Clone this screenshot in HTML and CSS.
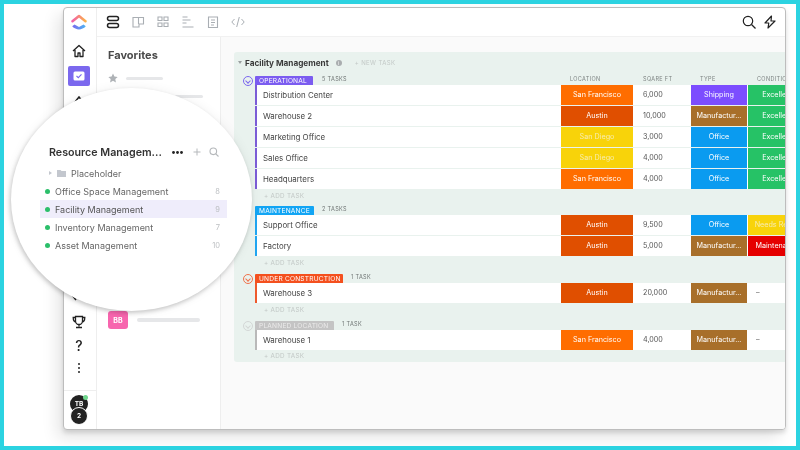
FILE: index.html
```html
<!DOCTYPE html>
<html lang="en">
<head>
<meta charset="utf-8">
<title>Facility Management</title>
<link rel="stylesheet" href="styles.css">
</head>
<body>
<div class="frame">
  <div class="window">
    <nav class="rail">
      <svg class="logo" viewBox="0 0 18 18" width="18" height="18">
        <defs>
          <linearGradient id="lg1" x1="0" x2="1"><stop offset="0" stop-color="#f25fa8"/><stop offset="1" stop-color="#fbb24a"/></linearGradient>
          <linearGradient id="lg2" x1="0" x2="1"><stop offset="0" stop-color="#7b68ee"/><stop offset="1" stop-color="#4db6f2"/></linearGradient>
        </defs>
        <path d="M2.500 7.200 9 2l6.500 5.200" fill="none" stroke="url(#lg1)" stroke-width="2.600" stroke-linecap="round" stroke-linejoin="round"/>
        <path d="M2.200 12.300C6 16.500 12 16.500 15.800 12.300L13.500 10.400 9 13 4.500 10.400Z" fill="url(#lg2)"/>
      </svg>
      <svg class="ico home" viewBox="0 0 14 14" width="14" height="14"><path d="M1 7 7 1.500 13 7M3 6v6.500h3V9h2v3.500h3V6" fill="none" stroke="#222" stroke-width="1.300" stroke-linejoin="round"/></svg>
      <div class="tile"><svg viewBox="0 0 12 10" width="12" height="10"><rect x=".5" y=".5" width="11" height="9" rx="1.500" fill="#fff"/><path d="M3.500 5 5.300 6.700 8.500 3.300" fill="none" stroke="#7b68ee" stroke-width="1.100"/></svg></div>
      <svg class="ico peek" viewBox="0 0 12 8" width="12" height="8"><path d="M2 7 6 2l4 5" fill="none" stroke="#222" stroke-width="1.500"/></svg>
      <div class="rail-spacer"></div>
      <svg class="ico peek-low" viewBox="0 0 12 8" width="12" height="8"><path d="M1 1 5 6" fill="none" stroke="#222" stroke-width="1.500"/></svg>
      <svg class="ico trophy" viewBox="0 0 14 14" width="14" height="14"><path d="M3.500 1.500h7V6a3.500 3.500 0 0 1-7 0ZM3.500 2.500H1.200c0 3 1 4.300 2.800 4.500M10.500 2.500h2.300c0 3-1 4.300-2.800 4.500M7 9.500v2M4 12.500h6" fill="none" stroke="#222" stroke-width="1.300"/></svg>
      <div class="help">?</div>
      <svg class="ico more" viewBox="0 0 4 12" width="4" height="12"><circle cx="2" cy="2" r="1.100" fill="#333"/><circle cx="2" cy="6" r="1.100" fill="#333"/><circle cx="2" cy="10" r="1.100" fill="#333"/></svg>
      <div class="rail-foot">
        <div class="avatar av-top">TB<span class="online"></span></div>
        <div class="avatar av-bottom">2</div>
      </div>
    </nav>
    <div class="content">
      <header class="topbar">
        <svg viewBox="0 0 14 14" width="14" height="14"><rect x="1.500" y="1.500" width="11" height="4" rx="2" fill="none" stroke="#222" stroke-width="1.500"/><rect x="1.500" y="8.500" width="11" height="4" rx="2" fill="none" stroke="#222" stroke-width="1.500"/></svg>
        <svg viewBox="0 0 14 14" width="14" height="14"><path d="M2 2.500h10.500V9H8v3H2ZM7.500 2.500V9" fill="none" stroke="#a9aeb3" stroke-width="1.100"/></svg>
        <svg viewBox="0 0 14 14" width="14" height="14"><path d="M2 2h4v3.500H2ZM8 2h4v3.500H8ZM2 8h4v3.500H2ZM8 8h4v3.500H8Z" fill="none" stroke="#a9aeb3" stroke-width="1.100"/></svg>
        <svg viewBox="0 0 14 14" width="14" height="14"><path d="M1.500 2h5M1.500 5h8M1.500 8h4M1.500 12h11" fill="none" stroke="#a9aeb3" stroke-width="1.100"/></svg>
        <svg viewBox="0 0 14 14" width="14" height="14"><path d="M2.500 2h9v10.500h-9ZM5 5h4M5 7.500h4M5 10h3" fill="none" stroke="#a9aeb3" stroke-width="1.100"/></svg>
        <svg viewBox="0 0 14 14" width="14" height="14"><path d="M3.500 4 .8 7l2.700 3M10.500 4l2.700 3-2.700 3M8.300 2 5.700 12" fill="none" stroke="#a9aeb3" stroke-width="1"/></svg>
        <div class="topbar-right">
          <svg viewBox="0 0 14 14" width="14" height="14"><circle cx="6" cy="6" r="4.700" fill="none" stroke="#222" stroke-width="1.200"/><path d="M9.500 9.500 13.500 13.500" stroke="#222" stroke-width="1.300"/></svg>
          <svg viewBox="0 0 12 14" width="12" height="14"><path d="M7.500 1 1 8h3.800L4 13 11 6H7Z" fill="none" stroke="#222" stroke-width="1.200" stroke-linejoin="round"/></svg>
        </div>
      </header>
      <div class="body">
        <aside class="sidebar">
          <h2 class="fav-title">Favorites</h2>
          <div class="fav-row">
            <svg viewBox="0 0 10 10" width="10" height="10"><path d="M5 .5 6.400 3.500 9.700 3.900 7.300 6.100 7.900 9.400 5 7.800 2.100 9.400 2.700 6.100.3 3.900 3.600 3.500Z" fill="#aeb2b6"/></svg>
            <span class="line line-short"></span>
          </div>
          <span class="line line-peek"></span>
          <div class="bb-row">
            <span class="bb">BB</span>
            <span class="line line-bb"></span>
          </div>
        </aside>
        <main class="main">
          <section class="panel">
            <div class="panel-head">
              <span class="caret-down"></span>
              <strong class="panel-title">Facility Management</strong>
              <span class="info">i</span>
              <span class="new-task">+ NEW TASK</span>
            </div>

            <div class="group-head">
              <span class="toggle t-purple"></span>
              <span class="label purple lab-op">OPERATIONAL</span>
              <span class="count">5 TASKS</span>
              <span class="col col-loc">LOCATION</span>
              <span class="col col-sq">SQARE FT</span>
              <span class="col col-type">TYPE</span>
              <span class="col col-cond">CONDITION</span>
            </div>
            <div class="rows">
              <div class="row b-purple"><span class="name">Distribution Center</span><span class="cell sf">San Francisco</span><span class="num">6,000</span><span class="cell ship">Shipping</span><span class="cell good">Excellent</span></div>
              <div class="row b-purple"><span class="name">Warehouse 2</span><span class="cell aus">Austin</span><span class="num">10,000</span><span class="cell mfg">Manufactur...</span><span class="cell good">Excellent</span></div>
              <div class="row b-purple"><span class="name">Marketing Office</span><span class="cell sd">San Diego</span><span class="num">3,000</span><span class="cell off">Office</span><span class="cell good">Excellent</span></div>
              <div class="row b-purple"><span class="name">Sales Office</span><span class="cell sd">San Diego</span><span class="num">4,000</span><span class="cell off">Office</span><span class="cell good">Excellent</span></div>
              <div class="row b-purple"><span class="name">Headquarters</span><span class="cell sf">San Francisco</span><span class="num">4,000</span><span class="cell off">Office</span><span class="cell good">Excellent</span></div>
            </div>
            <div class="add add-short">+ ADD TASK</div>

            <div class="group-head">
              <span class="label blue lab-mt">MAINTENANCE</span>
              <span class="count">2 TASKS</span>
            </div>
            <div class="rows">
              <div class="row b-blue"><span class="name">Support Office</span><span class="cell aus">Austin</span><span class="num">9,500</span><span class="cell off">Office</span><span class="cell needs">Needs Repair</span></div>
              <div class="row b-blue"><span class="name">Factory</span><span class="cell aus">Austin</span><span class="num">5,000</span><span class="cell mfg">Manufactur...</span><span class="cell maint">Maintenance</span></div>
            </div>
            <div class="add">+ ADD TASK</div>

            <div class="group-head">
              <span class="toggle t-red"></span>
              <span class="label red lab-uc">UNDER CONSTRUCTION</span>
              <span class="count">1 TASK</span>
            </div>
            <div class="rows">
              <div class="row b-red"><span class="name">Warehouse 3</span><span class="cell aus">Austin</span><span class="num">20,000</span><span class="cell mfg">Manufactur...</span><span class="dash">–</span></div>
            </div>
            <div class="add">+ ADD TASK</div>

            <div class="group-head">
              <span class="toggle t-grey"></span>
              <span class="label grey lab-pl">PLANNED LOCATION</span>
              <span class="count">1 TASK</span>
            </div>
            <div class="rows">
              <div class="row b-grey"><span class="name">Warehouse 1</span><span class="cell sf">San Francisco</span><span class="num">4,000</span><span class="cell mfg">Manufactur...</span><span class="dash">–</span></div>
            </div>
            <div class="add add-last">+ ADD TASK</div>
          </section>
        </main>
      </div>
    </div>
  </div>

  <div class="lens">
    <div class="lens-head">
      <strong class="lens-title">Resource Managem...</strong>
      <svg class="lens-dots" viewBox="0 0 11 3" width="11" height="3"><circle cx="1.500" cy="1.500" r="1.400" fill="#222"/><circle cx="5.500" cy="1.500" r="1.400" fill="#222"/><circle cx="9.500" cy="1.500" r="1.400" fill="#222"/></svg>
      <svg class="lens-plus" viewBox="0 0 8 8" width="8" height="8"><path d="M4 .5v7M.5 4h7" stroke="#b5b8bb" stroke-width="1"/></svg>
      <svg class="lens-search" viewBox="0 0 10 10" width="10" height="10"><circle cx="4.300" cy="4.300" r="3.300" fill="none" stroke="#b5b8bb" stroke-width="1.100"/><path d="M6.800 6.800 9.500 9.500" stroke="#b5b8bb" stroke-width="1.100"/></svg>
    </div>
    <div class="folder-row">
      <span class="caret-right"></span>
      <svg viewBox="0 0 9 8" width="9" height="8"><path d="M0 1h3.500l1 1H9v6H0Z" fill="#c3c7ce"/></svg>
      <span>Placeholder</span>
    </div>
    <ul class="lists">
      <li class="list-item"><span class="dot"></span><span class="list-name">Office Space Management</span><span class="list-num">8</span></li>
      <li class="list-item active"><span class="dot"></span><span class="list-name">Facility Management</span><span class="list-num">9</span></li>
      <li class="list-item"><span class="dot"></span><span class="list-name">Inventory Management</span><span class="list-num">7</span></li>
      <li class="list-item"><span class="dot"></span><span class="list-name">Asset Management</span><span class="list-num">10</span></li>
    </ul>
  </div>
</div>
</body>
</html>
```

FILE: styles.css
```css
* { box-sizing: border-box; }
html, body { margin: 0; padding: 0; }
body { width: 800px; height: 450px; overflow: hidden; background: #fff; font-family: Inter, "Liberation Sans", sans-serif; }

.frame {
  position: relative;
  width: 800px;
  height: 450px;
  border: 4px solid #2cd3e1;
  padding: 3px 0 0 59px;
  overflow: hidden;
  background: #fff;
  filter: blur(.35px);
}
.window {
  display: flex;
  width: 723px;
  height: 423px;
  background: #fff;
  border: 1px solid #bdbdbd;
  border-radius: 4px;
  overflow: hidden;
  box-shadow: -6px 8px 16px rgba(0,0,0,.1), 0 3px 4px rgba(0,0,0,.12);
}

/* rail */
.rail {
  flex: 0 0 33px;
  display: flex;
  flex-direction: column;
  align-items: center;
  padding: 6px 2px 0 0;
  border-right: 1px solid #eeeeee;
}
.logo { margin-bottom: 12px; }
.tile {
  width: 22px;
  height: 20px;
  margin-top: 8px;
  background: #7b68ee;
  border-radius: 2px;
  display: flex;
  align-items: center;
  justify-content: center;
}
.peek { margin-top: 9px; }
.rail-spacer { flex: 1; }
.peek-low { margin: 0 5px 13px 0; }
.help { font-size: 14px; font-weight: 500; color: #222; line-height: 16px; margin: 9px 0 8px; }
.more { margin-bottom: 16px; }
.rail-foot {
  flex: 0 0 39px;
  width: 32px;
  margin-right: -2px;
  padding-right: 2px;
  border-top: 1px solid #eeeeee;
  display: flex;
  flex-direction: column;
  align-items: center;
  padding-top: 4px;
}
.avatar {
  position: relative;
  flex: 0 0 18px;
  width: 18px;
  height: 18px;
  border-radius: 50%;
  background: #222;
  color: #fff;
  font-size: 6.500px;
  font-weight: 700;
  display: flex;
  align-items: center;
  justify-content: center;
}
.av-bottom { margin-top: -6px; border: 1px solid #fff; }
.online { position: absolute; right: 0; top: 0; width: 5px; height: 5px; border-radius: 50%; background: #6fd68c; }

/* top bar */
.content { flex: 1; min-width: 0; display: flex; flex-direction: column; }
.topbar {
  flex: 0 0 29px;
  display: flex;
  align-items: center;
  gap: 11px;
  padding: 0 9px;
  border-bottom: 1px solid #f1f1f1;
}
.topbar-right { margin-left: auto; display: flex; align-items: center; gap: 8px; }
.body { flex: 1; display: flex; min-height: 0; }

/* sidebar */
.sidebar {
  flex: 0 0 124px;
  border-right: 1px solid #eeeeee;
  padding: 11px 0 0 11px;
  display: flex;
  flex-direction: column;
}
.fav-title { margin: 0 0 11px; font-size: 11px; line-height: 14px; font-weight: 700; color: #4a4a4a; }
.fav-row { display: flex; align-items: center; gap: 8px; }
.line { display: block; background: #e6e7e9; border-radius: 2px; }
.line-short { width: 37px; height: 3px; }
.line-peek { width: 28px; height: 3px; margin: 12px 0 0 67px; }
.bb-row { display: flex; align-items: center; gap: 9px; margin-top: 213px; }
.bb { width: 20px; height: 18px; border-radius: 3px; background: #f765ae; color: #fff; font-size: 7px; font-weight: 700; display: flex; align-items: center; justify-content: center; }
.line-bb { width: 63px; height: 4px; }

/* main */
.main { flex: 1; min-width: 0; background: #fafafa; padding: 15px 0 0 13px; overflow: hidden; }
.panel { width: 551px; height: 310px; background: #e9f2ee; border-radius: 3px 0 0 3px; padding-left: 21px; overflow: hidden; }
.panel-head { height: 21px; margin-left: -17px; display: flex; align-items: center; gap: 3px; }
.caret-down { width: 0; height: 0; border: 2px solid transparent; border-top: 3px solid #9aa0a0; border-bottom: 0; }
.panel-title { font-size: 8.200px; font-weight: 700; color: #3a3a3a; white-space: nowrap; }
.info { width: 6px; height: 6px; margin-left: 4px; border-radius: 50%; background: #a9adaf; color: #fff; font-size: 5px; line-height: 6px; text-align: center; }
.new-task { margin-left: 10px; font-size: 6px; letter-spacing: .4px; color: #c2c8c6; }

.group-head { position: relative; height: 12px; display: flex; align-items: flex-end; }
.toggle { position: absolute; left: -12px; top: 3px; width: 10px; height: 10px; border-radius: 50%; border: 1px solid; }
.toggle::after { content: ""; position: absolute; left: 2px; top: 1.500px; width: 3px; height: 3px; border-right: 1px solid; border-bottom: 1px solid; transform: rotate(45deg); }
.t-purple { color: #7b68ee; }
.t-red { color: #f0714a; }
.t-grey { color: #d3d7d6; }
.label { height: 9px; line-height: 10px; padding-left: 4px; font-size: 6.600px; letter-spacing: .2px; color: #fff; white-space: nowrap; border-radius: 1px 1px 0 0; }
.lab-op { width: 58px; }
.lab-mt { width: 59px; }
.lab-uc { width: 88px; }
.lab-pl { width: 79px; }
.purple { background: #7b5cf0; }
.blue { background: #12a5f4; }
.red { background: #f4501e; }
.grey { background: #c4c4c4; color: #ecebeb; }
.count { margin-left: 8px; align-self: flex-start; padding-top: 3px; font-size: 5.500px; letter-spacing: .35px; color: #6f7574; white-space: nowrap; }
.lab-op + .count { margin-left: 9px; }
.col { position: absolute; top: 3px; font-size: 5.500px; letter-spacing: .35px; color: #7d8382; white-space: nowrap; }
.col-loc { left: 315px; }
.col-sq { left: 388px; }
.col-type { left: 445px; }
.col-cond { left: 502px; }

.rows { display: flex; flex-direction: column; gap: 1px; }
.row {
  flex: 0 0 20px;
  height: 20px;
  display: grid;
  grid-template-columns: 304px 72px 58px 56px 60px;
  grid-template-rows: 20px;
  align-items: stretch;
  background: #fff;
  border-left: 2px solid;
  white-space: nowrap;
}
.b-purple { border-left-color: #7b5cd6; }
.b-blue { border-left-color: #20a5f0; }
.b-red { border-left-color: #ee5a2c; }
.b-grey { border-left-color: #b9b9b9; }
.name { padding-left: 6px; font-size: 7.900px; line-height: 20px; color: #444; }
.num { padding-left: 10px; font-size: 7.200px; line-height: 20px; color: #555; }
.dash { padding-left: 9px; font-size: 7.200px; line-height: 20px; color: #666; }
.cell { text-align: center; font-size: 7.200px; line-height: 20px; color: #fff; overflow: hidden; }
.good { margin-left: 1px; background: #26c266; }
.needs { margin-left: 1px; background: #f8d30a; color: #f7ecb0; }
.maint { margin-left: 1px; background: #e50000; }
.sf { background: #ff6d00; }
.aus { background: #e04f00; }
.sd { background: #f8d30a; color: #f7ecb0; }
.ship { background: #7c4dff; }
.mfg { background: #a86f2a; }
.off { background: #0a9bf0; }
.add { height: 15px; padding-left: 9px; font-size: 6.300px; line-height: 15px; letter-spacing: .3px; color: #c2c8c6; }
.add-short { height: 14px; line-height: 14px; }
.add-last { height: 12px; line-height: 12px; }

/* magnifier lens */
.lens {
  position: absolute;
  left: 7px;
  top: 84px;
  width: 241px;
  height: 223px;
  border-radius: 50%;
  background: #fff;
  box-shadow: -1px 2px 4px rgba(0,0,0,.2), 0 0 12px rgba(0,0,0,.06);
  padding: 57px 0 0 29px;
}
.lens-head { display: flex; align-items: center; height: 14px; padding-left: 9px; }
.lens-title { font-size: 10.700px; font-weight: 600; color: #333; white-space: nowrap; width: 123px; }
.lens-plus { margin-left: 10px; }
.lens-search { margin-left: 8px; }
.folder-row { display: flex; align-items: center; gap: 5px; height: 18px; margin-top: 5px; padding-left: 9px; font-size: 9px; color: #666; }
.caret-right { width: 0; height: 0; border: 2.500px solid transparent; border-left: 3px solid #c3c7ce; border-right: 0; }
.lists { list-style: none; margin: 0; padding: 0; width: 187px; }
.list-item { display: flex; align-items: center; height: 18px; padding: 0 7px 0 5px; font-size: 9px; color: #666; }
.list-item.active { background: #efedfb; color: #555; }
.dot { width: 5px; height: 5px; border-radius: 50%; background: #2bbf6a; margin-right: 5px; }
.list-name { flex: 1; white-space: nowrap; }
.list-num { font-size: 7.500px; color: #bcbfc2; }
```
